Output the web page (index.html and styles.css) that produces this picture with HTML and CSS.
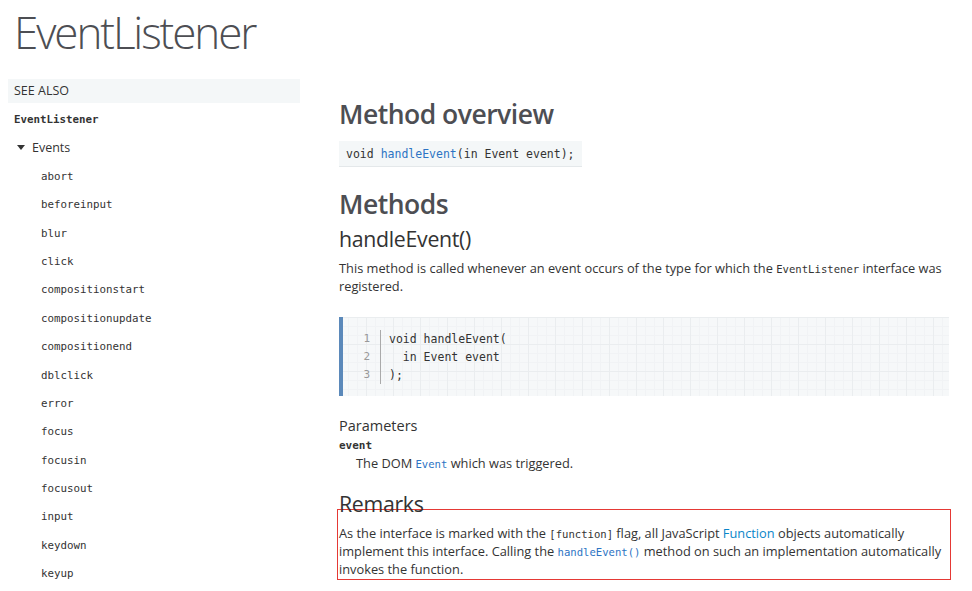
FILE: index.html
```html
<!DOCTYPE html>
<html lang="en">
<head>
<meta charset="utf-8">
<title>EventListener</title>
<link rel="stylesheet" href="styles.css">
</head>
<body>
<h1 class="page-title">EventListener</h1>
<div class="layout">
  <nav class="sidebar">
    <div class="see-also">SEE ALSO</div>
    <ul class="side-list">
      <li class="side-main">EventListener</li>
      <li class="side-group"><span class="caret"></span>Events</li>
      <li class="side-item">abort</li>
      <li class="side-item">beforeinput</li>
      <li class="side-item">blur</li>
      <li class="side-item">click</li>
      <li class="side-item">compositionstart</li>
      <li class="side-item">compositionupdate</li>
      <li class="side-item">compositionend</li>
      <li class="side-item">dblclick</li>
      <li class="side-item">error</li>
      <li class="side-item">focus</li>
      <li class="side-item">focusin</li>
      <li class="side-item">focusout</li>
      <li class="side-item">input</li>
      <li class="side-item">keydown</li>
      <li class="side-item">keyup</li>
    </ul>
  </nav>
  <main class="content">
    <h2 class="h2 first">Method overview</h2>
    <div class="overview"><code>void <span class="clink">handleEvent</span>(in Event event);</code></div>
    <h2 class="h2 methods">Methods</h2>
    <h3 class="h3">handleEvent()</h3>
    <p class="para">This method is called whenever an event occurs of the type for which the <code class="ic">EventListener</code> interface was registered.</p>
    <div class="codeblock">
      <div class="gutter"><span>1</span><span>2</span><span>3</span></div>
      <pre class="code">void handleEvent(
  in Event event
);</pre>
    </div>
    <h4 class="h4">Parameters</h4>
    <dl class="params">
      <dt class="pname">event</dt>
      <dd class="pdesc">The DOM <code class="ic clink">Event</code> which was triggered.</dd>
    </dl>
    <h3 class="h3 remarks">Remarks</h3>
    <div class="highlight">
      <p class="para">As the interface is marked with the <code class="ic">[function]</code> flag, all JavaScript <span class="link">Function</span> objects automatically implement this interface. Calling the <code class="ic clink">handleEvent()</code> method on such an implementation automatically invokes the function.</p>
    </div>
  </main>
</div>
</body>
</html>
```

FILE: styles.css
```css
* { box-sizing: border-box; }
body {
  margin: 0;
  font-family: "Open Sans", "Noto Sans", sans-serif;
  color: #333;
  background: #fff;
}
code, pre { font-family: "DejaVu Sans Mono", "Liberation Mono", monospace; }

.page-title {
  margin: 0;
  padding-left: 14px;
  font-size: 44px;
  font-weight: 300;
  line-height: 64px;
  color: #4d4e53;
  letter-spacing: -2.1px;
}

.layout { display: flex; }

.sidebar {
  width: 292px;
  margin-left: 8px;
  margin-top: 15px;
  flex: none;
}
.see-also {
  height: 24px;
  line-height: 24px;
  background: #f4f7f8;
  padding-left: 6px;
  font-size: 12.5px;
  color: #333;
}
.side-list {
  list-style: none;
  margin: 3px 0 0;
  padding: 0;
  font-family: "DejaVu Sans Mono", "Liberation Mono", monospace;
  font-size: 10.8px;
}
.side-list li {
  height: 28.4px;
  line-height: 28.4px;
  color: #333;
}
.side-main { padding-left: 6px; font-weight: bold; color: #3a3a3a; }
.side-group {
  padding-left: 9px;
  font-family: "Open Sans", sans-serif;
  font-size: 12.5px;
  display: flex;
  align-items: center;
}
.caret {
  width: 0; height: 0;
  border-left: 4px solid transparent;
  border-right: 4px solid transparent;
  border-top: 5px solid #333;
  margin-right: 7px;
  margin-top: -2px;
}
.side-item { padding-left: 33px; }

.content {
  margin-left: 39px;
  width: 612px;
  flex: none;
}
.h2 {
  margin: 0;
  font-size: 26.5px;
  font-weight: 600;
  line-height: 36px;
  color: #4d4e53;
  letter-spacing: -0.5px;
}
.h2.first { margin-top: 32px; }
.h2.methods { margin-top: 19px; }
.overview {
  margin-top: 9px;
  display: inline-block;
  background: #f4f7f8;
  border-bottom: 1px solid #e4e8ea;
  padding: 0 7px;
  height: 26px;
  line-height: 26px;
  font-size: 11.5px;
  color: #333;
}
.overview code { font-size: 11.5px; }
.clink { color: #2d74c4; }
.link { color: #0a86c9; }

.h3 {
  margin: 2px 0 0;
  font-size: 21.3px;
  font-weight: 400;
  line-height: 30px;
  color: #333;
  letter-spacing: -0.3px;
}
.para {
  margin: 5px 0 0;
  font-size: 12.8px;
  line-height: 18px;
  color: #333;
}
.ic { font-size: 10.6px; line-height: 1; }

.codeblock {
  margin-top: 22px;
  width: 610px;
  height: 79px;
  display: flex;
  align-items: flex-start;
  padding-top: 13px;
  border-left: 4px solid #5b89ba;
  background-color: #f6f8f9;
  background-image:
    linear-gradient(#eaedef 1px, transparent 1px),
    linear-gradient(90deg, #eaedef 1px, transparent 1px),
    linear-gradient(#f1f3f5 1px, transparent 1px),
    linear-gradient(90deg, #f1f3f5 1px, transparent 1px);
  background-size: 27px 27px, 27px 27px, 9px 9px, 9px 9px;
  background-position: -4px 0;
}
.gutter {
  width: 38px;
  display: flex;
  flex-direction: column;
  align-items: flex-end;
  padding-right: 10px;
  border-right: 1px solid #aaa;
  font-family: "DejaVu Sans Mono", monospace;
  font-size: 11px;
  line-height: 18px;
  color: #999;
}
.code {
  margin: 0;
  padding-left: 8px;
  font-size: 11.5px;
  line-height: 18px;
  color: #333;
}

.h4 {
  margin: 20px 0 0;
  font-size: 14.5px;
  font-weight: 400;
  line-height: 20px;
  color: #333;
}
.params { margin: 0; }
.pname {
  font-family: "DejaVu Sans Mono", monospace;
  font-weight: bold;
  font-size: 11px;
  line-height: 19px;
}
.pdesc {
  margin: 0 0 0 17px;
  font-size: 12.8px;
  line-height: 17px;
}
.remarks { margin-top: 17px; }
.highlight {
  margin: -10px 0 0 -2px;
  width: 614px;
  border: 1px solid #e53935;
  padding: 0 0 1px 1px;
}
.highlight .para { margin-top: 14px; }
```
